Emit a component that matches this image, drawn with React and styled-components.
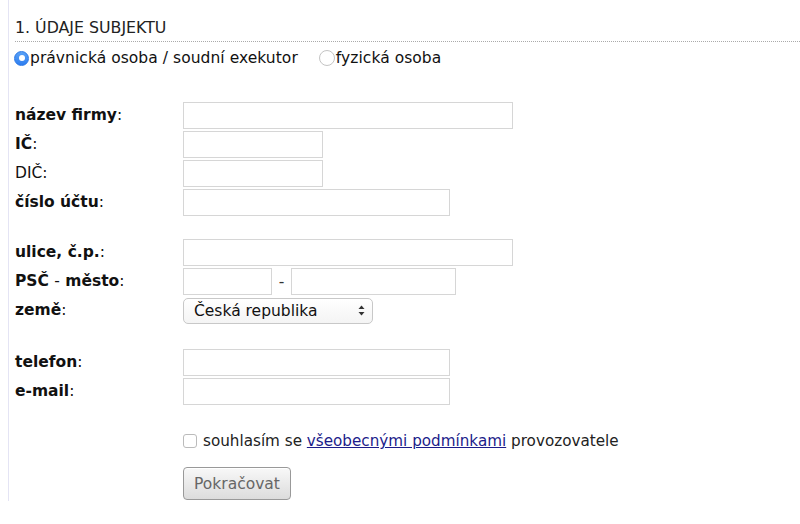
import React from "react";
import styled, { createGlobalStyle } from "styled-components";

const Global = createGlobalStyle`
  html, body { margin: 0; padding: 0; background: #fff; }
  body { font-family: "DejaVu Sans", Verdana, sans-serif; font-size: 15.5px; color: #111; }
`;

const Page = styled.div`
  margin-left: 8px;
  border-left: 1px solid #e4e4f4;
  padding: 18px 0 1px 6px;
`;

const Heading = styled.h2`
  margin: 0;
  font-size: 15.8px;
  font-weight: normal;
  color: #222;
  line-height: 20px;
  padding-bottom: 3px;
  border-bottom: 1px dotted #aaa;
`;

const RadioRow = styled.div`
  display: flex;
  align-items: center;
  gap: 21px;
  margin: 6px 0 0 -1px;
  height: 20px;
`;

const RadioLabel = styled.label`
  display: flex;
  align-items: center;
  gap: 1px;
  cursor: pointer;
  letter-spacing: 0.05px;
`;

const Radio = styled.span`
  width: ${(p) => (p.$checked ? 15 : 16)}px;
  height: ${(p) => (p.$checked ? 15 : 16)}px;
  border-radius: 50%;
  box-sizing: border-box;
  display: inline-flex;
  align-items: center;
  justify-content: center;
  background: ${(p) => (p.$checked ? "linear-gradient(#5aa2f6, #2e7ef0)" : "#fff")};
  border: 1px solid ${(p) => (p.$checked ? "#2a78e6" : "#c4c4c4")};
  &::after {
    content: "";
    width: 6px;
    height: 6px;
    border-radius: 50%;
    background: #fff;
    display: ${(p) => (p.$checked ? "block" : "none")};
  }
`;

const Form = styled.div`
  margin-top: 34px;
  display: flex;
  flex-direction: column;
`;

const Group = styled.div`
  display: grid;
  grid-template-columns: 168px auto;
  row-gap: 2px;
  margin-bottom: ${(p) => p.$after}px;
  align-items: center;
`;

const Label = styled.div`
  font-weight: ${(p) => (p.$plain ? "normal" : "bold")};
  line-height: 27px;
  color: #111;
  span { font-weight: normal; }
`;

const Field = styled.div`
  display: flex;
  align-items: center;
`;

const Input = styled.input`
  box-sizing: border-box;
  width: ${(p) => p.$w}px;
  height: 27px;
  border: 1px solid #d6d6d6;
  border-radius: 0;
  padding: 2px 4px;
  font: inherit;
  outline: none;
`;

const Dash = styled.span`
  width: 19px;
  text-align: center;
  color: #333;
`;

const Select = styled.div`
  box-sizing: border-box;
  width: 190px;
  height: 26px;
  border: 1px solid #c8c8c8;
  border-radius: 5px;
  background: linear-gradient(#ffffff, #f4f4f4);
  display: flex;
  align-items: center;
  justify-content: space-between;
  padding: 0 7px 0 10px;
  color: #111;
`;

const Arrows = styled.svg`
  width: 7px;
  height: 11px;
`;

const Agree = styled.div`
  margin-left: 168px;
  display: flex;
  align-items: center;
  gap: 6px;
  height: 20px;
  color: #222;
  font-size: 15.2px;
`;

const Check = styled.span`
  width: 14px;
  height: 14px;
  box-sizing: border-box;
  border: 1px solid #bbb;
  border-radius: 3px;
  background: #fff;
`;

const Link = styled.a`
  color: #1c1c8a;
  text-decoration: underline;
`;

const Button = styled.button`
  margin: 16px 0 0 168px;
  width: 108px;
  height: 33px;
  box-sizing: border-box;
  border: 1px solid #999;
  border-radius: 4px;
  background: linear-gradient(#f8f8f8, #dcdcdc);
  font: inherit;
  color: #666;
  align-self: flex-start;
  box-shadow: inset 0 1px 0 #fff;
`;

export default function App() {
  return (
    <>
      <Global />
      <Page>
        <Heading>1. ÚDAJE SUBJEKTU</Heading>
        <RadioRow>
          <RadioLabel>
            <Radio $checked />
            právnická osoba / soudní exekutor
          </RadioLabel>
          <RadioLabel>
            <Radio />
            fyzická osoba
          </RadioLabel>
        </RadioRow>
        <Form>
          <Group $after={23}>
            <Label>název firmy<span>:</span></Label>
            <Field><Input $w={330} /></Field>
            <Label>IČ<span>:</span></Label>
            <Field><Input $w={140} /></Field>
            <Label $plain>DIČ:</Label>
            <Field><Input $w={140} /></Field>
            <Label>číslo účtu<span>:</span></Label>
            <Field><Input $w={267} /></Field>
          </Group>
          <Group $after={25}>
            <Label>ulice, č.p.<span>:</span></Label>
            <Field><Input $w={330} /></Field>
            <Label>PSČ <span>-</span> město<span>:</span></Label>
            <Field>
              <Input $w={89} />
              <Dash>-</Dash>
              <Input $w={165} />
            </Field>
            <Label>země<span>:</span></Label>
            <Field>
              <Select>
                Česká republika
                <Arrows viewBox="0 0 7 11">
                  <path d="M3.5 0.5 L6.5 4 L0.5 4 Z" fill="#333" />
                  <path d="M3.5 10.5 L6.5 7 L0.5 7 Z" fill="#333" />
                </Arrows>
              </Select>
            </Field>
          </Group>
          <Group $after={26}>
            <Label>telefon<span>:</span></Label>
            <Field><Input $w={267} /></Field>
            <Label>e-mail<span>:</span></Label>
            <Field><Input $w={267} /></Field>
          </Group>
          <Agree>
            <Check />
            <span>
              souhlasím se <Link href="#">všeobecnými podmínkami</Link> provozovatele
            </span>
          </Agree>
          <Button>Pokračovat</Button>
        </Form>
      </Page>
    </>
  );
}
